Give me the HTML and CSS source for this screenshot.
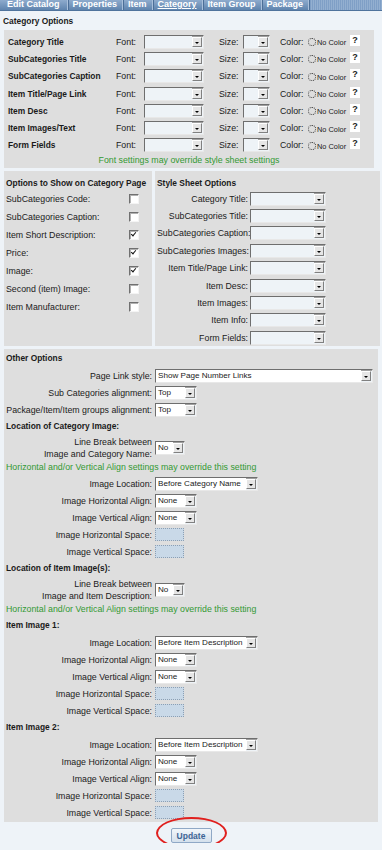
FILE: index.html
```html
<!DOCTYPE html>
<html lang="en">
<head>
    <meta charset="UTF-8">
    <meta name="viewport" content="width=device-width, initial-scale=1.0">
    <link rel="stylesheet" href="styles.css">
</head>
<body>

<div class="tabs">
    <span class="tab">Edit Catalog</span>
    <span class="tab">Properties</span>
    <span class="tab">Item</span>
    <span class="tab active">Category</span>
    <span class="tab">Item Group</span>
    <span class="tab">Package</span>
    <span class="tab-fill"></span>
</div>

<div class="page">
    <div class="page-title">Category Options</div>

    <!-- fonts -->
    <div class="panel font-panel">
        <div class="font-row">
            <span class="fr-label">Category Title</span>
            <span class="fr-font">Font:</span>
            <span class="sel w60"><span class="sel-text"></span><span class="sel-btn"></span></span>
            <span class="fr-size">Size:</span>
            <span class="sel w27"><span class="sel-text"></span><span class="sel-btn"></span></span>
            <span class="fr-color">Color:</span>
            <span class="radio"></span><span class="nocolor">No Color</span>
            <span class="help">?</span>
        </div>
        <div class="font-row">
            <span class="fr-label">SubCategories Title</span>
            <span class="fr-font">Font:</span>
            <span class="sel w60"><span class="sel-text"></span><span class="sel-btn"></span></span>
            <span class="fr-size">Size:</span>
            <span class="sel w27"><span class="sel-text"></span><span class="sel-btn"></span></span>
            <span class="fr-color">Color:</span>
            <span class="radio"></span><span class="nocolor">No Color</span>
            <span class="help">?</span>
        </div>
        <div class="font-row">
            <span class="fr-label">SubCategories Caption</span>
            <span class="fr-font">Font:</span>
            <span class="sel w60"><span class="sel-text"></span><span class="sel-btn"></span></span>
            <span class="fr-size">Size:</span>
            <span class="sel w27"><span class="sel-text"></span><span class="sel-btn"></span></span>
            <span class="fr-color">Color:</span>
            <span class="radio"></span><span class="nocolor">No Color</span>
            <span class="help">?</span>
        </div>
        <div class="font-row">
            <span class="fr-label">Item Title/Page Link</span>
            <span class="fr-font">Font:</span>
            <span class="sel w60"><span class="sel-text"></span><span class="sel-btn"></span></span>
            <span class="fr-size">Size:</span>
            <span class="sel w27"><span class="sel-text"></span><span class="sel-btn"></span></span>
            <span class="fr-color">Color:</span>
            <span class="radio"></span><span class="nocolor">No Color</span>
            <span class="help">?</span>
        </div>
        <div class="font-row">
            <span class="fr-label">Item Desc</span>
            <span class="fr-font">Font:</span>
            <span class="sel w60"><span class="sel-text"></span><span class="sel-btn"></span></span>
            <span class="fr-size">Size:</span>
            <span class="sel w27"><span class="sel-text"></span><span class="sel-btn"></span></span>
            <span class="fr-color">Color:</span>
            <span class="radio"></span><span class="nocolor">No Color</span>
            <span class="help">?</span>
        </div>
        <div class="font-row">
            <span class="fr-label">Item Images/Text</span>
            <span class="fr-font">Font:</span>
            <span class="sel w60"><span class="sel-text"></span><span class="sel-btn"></span></span>
            <span class="fr-size">Size:</span>
            <span class="sel w27"><span class="sel-text"></span><span class="sel-btn"></span></span>
            <span class="fr-color">Color:</span>
            <span class="radio"></span><span class="nocolor">No Color</span>
            <span class="help">?</span>
        </div>
        <div class="font-row">
            <span class="fr-label">Form Fields</span>
            <span class="fr-font">Font:</span>
            <span class="sel w60"><span class="sel-text"></span><span class="sel-btn"></span></span>
            <span class="fr-size">Size:</span>
            <span class="sel w27"><span class="sel-text"></span><span class="sel-btn"></span></span>
            <span class="fr-color">Color:</span>
            <span class="radio"></span><span class="nocolor">No Color</span>
            <span class="help">?</span>
        </div>
        <div class="note center">Font settings may override style sheet settings</div>
    </div>

    <div class="split">
        <!-- checkboxes -->
        <div class="panel show-panel">
            <div class="panel-head">Options to Show on Category Page</div>
            <div class="show-row"><span class="show-label">SubCategories Code:</span><span class="check"></span></div>
            <div class="show-row"><span class="show-label">SubCategories Caption:</span><span class="check"></span></div>
            <div class="show-row"><span class="show-label">Item Short Description:</span><span class="check on"></span></div>
            <div class="show-row"><span class="show-label">Price:</span><span class="check on"></span></div>
            <div class="show-row"><span class="show-label">Image:</span><span class="check on"></span></div>
            <div class="show-row"><span class="show-label">Second (item) Image:</span><span class="check"></span></div>
            <div class="show-row"><span class="show-label">Item Manufacturer:</span><span class="check"></span></div>
        </div>

        <!-- style sheet -->
        <div class="panel css-panel">
            <div class="panel-head">Style Sheet Options</div>
            <div class="css-row"><span class="css-label">Category Title:</span><span class="sel w76"><span class="sel-text"></span><span class="sel-btn"></span></span></div>
            <div class="css-row"><span class="css-label">SubCategories Title:</span><span class="sel w76"><span class="sel-text"></span><span class="sel-btn"></span></span></div>
            <div class="css-row"><span class="css-label">SubCategories Caption:</span><span class="sel w76"><span class="sel-text"></span><span class="sel-btn"></span></span></div>
            <div class="css-row"><span class="css-label">SubCategories Images:</span><span class="sel w76"><span class="sel-text"></span><span class="sel-btn"></span></span></div>
            <div class="css-row"><span class="css-label">Item Title/Page Link:</span><span class="sel w76"><span class="sel-text"></span><span class="sel-btn"></span></span></div>
            <div class="css-row"><span class="css-label">Item Desc:</span><span class="sel w76"><span class="sel-text"></span><span class="sel-btn"></span></span></div>
            <div class="css-row"><span class="css-label">Item Images:</span><span class="sel w76"><span class="sel-text"></span><span class="sel-btn"></span></span></div>
            <div class="css-row"><span class="css-label">Item Info:</span><span class="sel w76"><span class="sel-text"></span><span class="sel-btn"></span></span></div>
            <div class="css-row"><span class="css-label">Form Fields:</span><span class="sel w76"><span class="sel-text"></span><span class="sel-btn"></span></span></div>
        </div>
    </div>

    <!-- other -->
    <div class="panel other-panel">
        <div class="o-head">Other Options</div>
        <div class="o-row"><span class="o-label">Page Link style:</span><span class="sel w218"><span class="sel-text">Show Page Number Links</span><span class="sel-btn"></span></span></div>
        <div class="o-row"><span class="o-label">Sub Categories alignment:</span><span class="sel w42"><span class="sel-text">Top</span><span class="sel-btn"></span></span></div>
        <div class="o-row"><span class="o-label">Package/Item/Item groups alignment:</span><span class="sel w42"><span class="sel-text">Top</span><span class="sel-btn"></span></span></div>

        <div class="o-head">Location of Category Image:</div>
        <div class="o-row tall"><span class="o-label">Line Break between<br>Image and Category Name:</span><span class="sel w30"><span class="sel-text">No</span><span class="sel-btn"></span></span></div>
        <div class="note">Horizontal and/or Vertical Align settings may override this setting</div>
        <div class="o-row"><span class="o-label">Image Location:</span><span class="sel w102"><span class="sel-text">Before Category Name</span><span class="sel-btn"></span></span></div>
        <div class="o-row"><span class="o-label">Image Horizontal Align:</span><span class="sel w42"><span class="sel-text">None</span><span class="sel-btn"></span></span></div>
        <div class="o-row"><span class="o-label">Image Vertical Align:</span><span class="sel w42"><span class="sel-text">None</span><span class="sel-btn"></span></span></div>
        <div class="o-row"><span class="o-label">Image Horizontal Space:</span><span class="field"></span></div>
        <div class="o-row"><span class="o-label">Image Vertical Space:</span><span class="field"></span></div>

        <div class="o-head">Location of Item Image(s):</div>
        <div class="o-row tall"><span class="o-label">Line Break between<br>Image and Item Description:</span><span class="sel w30"><span class="sel-text">No</span><span class="sel-btn"></span></span></div>
        <div class="note">Horizontal and/or Vertical Align settings may override this setting</div>

        <div class="o-head">Item Image 1:</div>
        <div class="o-row"><span class="o-label">Image Location:</span><span class="sel w102"><span class="sel-text">Before Item Description</span><span class="sel-btn"></span></span></div>
        <div class="o-row"><span class="o-label">Image Horizontal Align:</span><span class="sel w42"><span class="sel-text">None</span><span class="sel-btn"></span></span></div>
        <div class="o-row"><span class="o-label">Image Vertical Align:</span><span class="sel w42"><span class="sel-text">None</span><span class="sel-btn"></span></span></div>
        <div class="o-row"><span class="o-label">Image Horizontal Space:</span><span class="field"></span></div>
        <div class="o-row"><span class="o-label">Image Vertical Space:</span><span class="field"></span></div>

        <div class="o-head">Item Image 2:</div>
        <div class="o-row"><span class="o-label">Image Location:</span><span class="sel w102"><span class="sel-text">Before Item Description</span><span class="sel-btn"></span></span></div>
        <div class="o-row"><span class="o-label">Image Horizontal Align:</span><span class="sel w42"><span class="sel-text">None</span><span class="sel-btn"></span></span></div>
        <div class="o-row"><span class="o-label">Image Vertical Align:</span><span class="sel w42"><span class="sel-text">None</span><span class="sel-btn"></span></span></div>
        <div class="o-row"><span class="o-label">Image Horizontal Space:</span><span class="field"></span></div>
        <div class="o-row"><span class="o-label">Image Vertical Space:</span><span class="field"></span></div>
    </div>

    <div class="actions">
        <span class="update-wrap">
            <button type="button" class="btn-update">Update</button>
            <span class="mark"></span>
        </span>
    </div>
</div>

</body>
</html>
```

FILE: styles.css
```css
body {
    margin: 0;
    background-color: #eef3f8;
    font-family: "Liberation Sans", Arial, sans-serif;
    font-size: 8.8px;
    color: #1a1a1a;
}

/* tab bar */
.tabs {
    display: flex;
    height: 10px;
    background: linear-gradient(#8eabcd, #5f84ae);
    border-bottom: 1px solid #4f739c;
    overflow: hidden;
}

.tab {
    padding: 0 5px;
    color: #fff;
    font-weight: bold;
    font-size: 9px;
    line-height: 9px;
    border-right: 1px solid #a9c0db;
    box-shadow: 1px 0 0 #4c6f98;
    white-space: nowrap;
}

.tab:first-child {
    padding-left: 7px;
    padding-right: 7px;
}

.tab.active {
    text-decoration: underline;
}

.tab-fill {
    flex: 1;
    margin-left: 1px;
    background: repeating-linear-gradient(90deg, #7f9fc6 0 1px, #93afd0 1px 2px);
}

.page {
    padding: 0 0 0 4px;
}

.page-title {
    font-weight: bold;
    font-size: 8.4px;
    padding: 6px 0 0 0;
    margin-left: -1px;
    height: 13px;
    line-height: 9px;
}

.panel {
    background-color: #dedede;
    box-sizing: border-box;
}

/* font table */
.font-panel {
    width: 370px;
    padding: 3px 0 0 4px;
    height: 138px;
}

.font-row {
    display: flex;
    align-items: center;
    height: 17.3px;
}

.fr-label {
    width: 108px;
    font-weight: bold;
    font-size: 8.4px;
}

.fr-font {
    width: 28px;
}

.fr-size {
    width: 39px;
    padding-left: 15px;
    box-sizing: border-box;
}

.fr-color {
    width: 38px;
    padding-left: 10px;
    box-sizing: border-box;
}

.radio {
    width: 6px;
    height: 6px;
    border: 1px dotted #333;
    border-radius: 50%;
    margin-top: 1px;
}

.nocolor {
    font-size: 7.4px;
    margin-left: 1px;
    margin-top: 2px;
    width: 33px;
    white-space: nowrap;
}

.help {
    width: 10px;
    height: 11px;
    background: #fff;
    font-weight: bold;
    font-size: 9px;
    text-align: center;
    line-height: 10px;
    margin-top: -3px;
}

.note {
    color: #339933;
    height: 15px;
    line-height: 15px;
    white-space: nowrap;
}

.note.center {
    text-align: center;
    height: 13px;
    line-height: 13px;
    padding-right: 4px;
}

/* select boxes */
.sel {
    display: inline-flex;
    height: 14px;
    box-sizing: border-box;
    border: 1px solid;
    border-color: #6e6e6e #e8e8e8 #e8e8e8 #6e6e6e;
    box-shadow: inset 1px 1px 0 #a0a0a0;
    background-color: #eef3f7;
}

.sel-text {
    flex: 1;
    padding-left: 2px;
    font-size: 8.1px;
    line-height: 12px;
    white-space: nowrap;
    overflow: hidden;
    background-color: #fff;
}

.sel .sel-text:empty {
    background-color: #eef3f7;
}

.sel-btn {
    width: 10px;
    flex: none;
    margin: 1px 1px 1px 0;
    background-color: #e6e6e6;
    border: 1px solid;
    border-color: #fff #808080 #808080 #fff;
    box-sizing: border-box;
    position: relative;
}

.sel-btn::after {
    content: "";
    position: absolute;
    left: 2px;
    top: 4px;
    border-left: 2px solid transparent;
    border-right: 2px solid transparent;
    border-top: 2px solid #000;
}

.w27 { width: 27px; }
.w30 { width: 30px; }
.w42 { width: 42px; }
.w60 { width: 60px; }
.w76 { width: 76px; }
.w102 { width: 103px; }
.w218 { width: 218px; }

/* checkbox + style sheet panels */
.split {
    display: flex;
    gap: 3px;
    margin-top: 3px;
    height: 175px;
}

.panel-head {
    font-weight: bold;
    font-size: 8.4px;
    height: 14px;
    line-height: 14px;
    white-space: nowrap;
}

.show-panel {
    width: 148px;
    padding: 5px 0 0 2px;
}

.show-row {
    display: flex;
    align-items: center;
    height: 18px;
}

.show-label {
    width: 123px;
}

.check {
    width: 10px;
    height: 10px;
    box-sizing: border-box;
    background-color: #fff;
    border: 1px solid;
    border-color: #707070 #f4f4f4 #f4f4f4 #707070;
    box-shadow: inset 1px 1px 0 #b0b0b0;
    position: relative;
}

.check.on::after {
    content: "";
    position: absolute;
    left: 2px;
    top: 0px;
    width: 2px;
    height: 4px;
    border: solid #111;
    border-width: 0 1.5px 1.5px 0;
    transform: rotate(40deg);
}

.css-panel {
    flex: 1;
    margin-right: 2px;
    padding: 5px 0 0 2px;
}

.css-row {
    display: flex;
    align-items: center;
    height: 17.4px;
}

.css-label {
    width: 91px;
    text-align: right;
    padding-right: 2px;
    white-space: nowrap;
}

/* other options */
.other-panel {
    margin-top: 3px;
    margin-right: 4px;
    padding: 1px 0 0 2px;
    height: 473px;
}

.o-head {
    font-weight: bold;
    font-size: 8.4px;
    height: 17px;
    line-height: 17px;
}

.o-row {
    display: flex;
    align-items: center;
    height: 17px;
}

.o-row.tall {
    height: 25px;
}

.o-row.tall .o-label {
    line-height: 12px;
}

.o-label {
    width: 146px;
    flex: none;
    text-align: right;
    padding-right: 3px;
    white-space: nowrap;
}

.field {
    width: 29px;
    height: 13px;
    box-sizing: border-box;
    background-color: #c9d9e8;
    border: 1px dotted #8c9fb3;
}

/* update */
.actions {
    display: flex;
    justify-content: center;
    padding: 6px 0 0 0;
    margin-right: 4px;
}

.update-wrap {
    position: relative;
}

.btn-update {
    width: 41px;
    height: 15px;
    padding: 0;
    font-family: "Liberation Sans", Arial, sans-serif;
    font-size: 8.5px;
    font-weight: bold;
    color: #3d6494;
    background: linear-gradient(#f2f6fa, #d4e0ec);
    border: 1px solid #8fa8c6;
    border-radius: 2px;
}

.mark {
    position: absolute;
    left: -15px;
    top: -11px;
    width: 67px;
    height: 28px;
    border: 2px solid #e0201e;
    border-radius: 50%;
}
```
